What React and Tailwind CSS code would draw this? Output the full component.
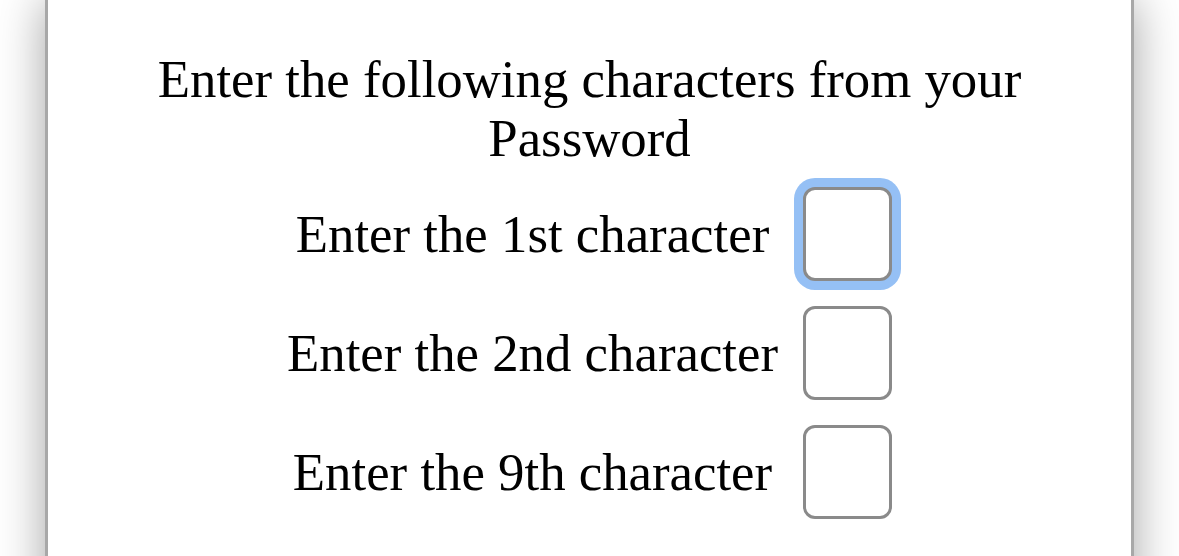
import { useState } from "react";

const CHARS = [
  { id: "c1", label: "Enter the 1st character" },
  { id: "c2", label: "Enter the 2nd character" },
  { id: "c9", label: "Enter the 9th character" },
];

export default function App() {
  const [values, setValues] = useState({ c1: "", c2: "", c9: "" });

  return (
    <div className="h-[556px] overflow-hidden bg-white">
      <div
        className="mx-[45px] h-[700px] border-x-[3px] border-[#a8a8a8] bg-white px-12 pt-[50px] shadow-[0_0_45px_rgba(0,0,0,0.36)]"
        style={{ fontFamily: '"Liberation Serif", "Times New Roman", serif' }}
      >
        <h1 className="mb-[19px] text-center text-[52.8px] font-normal leading-[59px] text-black">
          Enter the following characters from your Password
        </h1>

        <div className="grid grid-cols-[auto_auto] items-center justify-center gap-x-[25px] gap-y-[25px]">
          {CHARS.map((c, i) => (
            <div key={c.id} className="contents">
              <label
                htmlFor={c.id}
                className="text-center text-[52.8px] leading-[59px] text-black"
              >
                {c.label}
              </label>
              <input
                id={c.id}
                type="password"
                maxLength={1}
                value={values[c.id]}
                onChange={(e) => setValues({ ...values, [c.id]: e.target.value })}
                className={`h-[94px] w-[89px] rounded-[12px] border-[3px] border-[#8a8a8a] bg-white text-center text-[40px] outline-none ${
                  i === 0 ? "shadow-[0_0_0_9px_#95c0f5]" : ""
                }`}
              />
            </div>
          ))}
        </div>
      </div>
    </div>
  );
}
